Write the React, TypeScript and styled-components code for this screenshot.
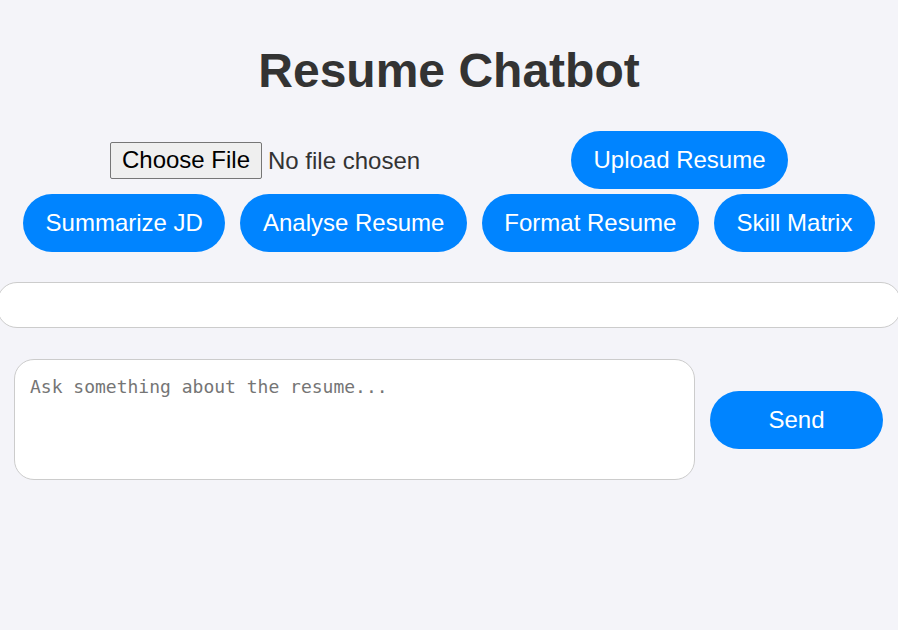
import React from "react";
import styled, { createGlobalStyle } from "styled-components";

const Global = createGlobalStyle`
  html, body {
    margin: 0;
    padding: 0;
    background: #f4f4f9;
    font-family: "Liberation Sans", Arial, sans-serif;
    overflow: hidden;
  }
`;

const Page = styled.div`
  display: flex;
  flex-direction: column;
  align-items: center;
  padding-top: 43px;
  min-height: 630px;
  box-sizing: border-box;
  color: #333;
`;

const Title = styled.h1`
  margin: 0 0 33px;
  font-size: 48px;
  font-weight: bold;
  color: #333;
  line-height: normal;
`;

const Controls = styled.div`
  display: flex;
  flex-direction: column;
  align-items: center;
  gap: 5px;
`;

const Row = styled.div`
  display: flex;
  justify-content: center;
  align-items: center;
  gap: 15px;
`;

const FileInput = styled.input`
  width: 446px;
  font-family: "Liberation Sans", Arial, sans-serif;
  font-size: 24px;
  color: #333;
  &::file-selector-button {
    font-family: "Liberation Sans", Arial, sans-serif;
    font-size: 24px;
    color: #000;
    padding: 1px 11px;
    margin-right: 6px;
    border: 1px solid #767676;
    border-radius: 2px;
    background: #efefef;
    height: 37px;
  }
`;

const PillButton = styled.button<{ $wide?: boolean }>`
  background: #0084ff;
  color: #fff;
  border: none;
  border-radius: 29px;
  height: 58px;
  padding: 0 ${(p) => (p.$wide ? "58.5px" : "22.5px")};
  font-family: "Liberation Sans", Arial, sans-serif;
  font-size: 24px;
  cursor: pointer;
  flex-shrink: 0;
  white-space: nowrap;
`;

const ChatBox = styled.div`
  align-self: stretch;
  height: 46px;
  margin: 30px -3px 0;
  background: #fff;
  border: 1px solid #ccc;
  border-radius: 20px;
  box-sizing: border-box;
`;

const InputRow = styled.div`
  align-self: stretch;
  display: flex;
  align-items: center;
  gap: 15px;
  padding: 31px 15px 0 14px;
`;

const Question = styled.textarea`
  flex: 1;
  height: 121px;
  box-sizing: border-box;
  padding: 16px 15px 15px;
  border: 1px solid #ccc;
  border-radius: 20px;
  background: #fff;
  resize: none;
  font-family: "DejaVu Sans Mono", monospace;
  font-size: 18px;
  color: #333;
  outline: none;
  &::placeholder {
    color: #757575;
  }
`;

export default function App() {
  return (
    <>
      <Global />
      <Page>
        <Title>Resume Chatbot</Title>
        <Controls>
          <Row>
            <FileInput type="file" />
            <PillButton>Upload Resume</PillButton>
          </Row>
          <Row>
            <PillButton>Summarize JD</PillButton>
            <PillButton>Analyse Resume</PillButton>
            <PillButton>Format Resume</PillButton>
            <PillButton>Skill Matrix</PillButton>
          </Row>
        </Controls>
        <ChatBox />
        <InputRow>
          <Question placeholder="Ask something about the resume..." />
          <PillButton $wide>Send</PillButton>
        </InputRow>
      </Page>
    </>
  );
}
